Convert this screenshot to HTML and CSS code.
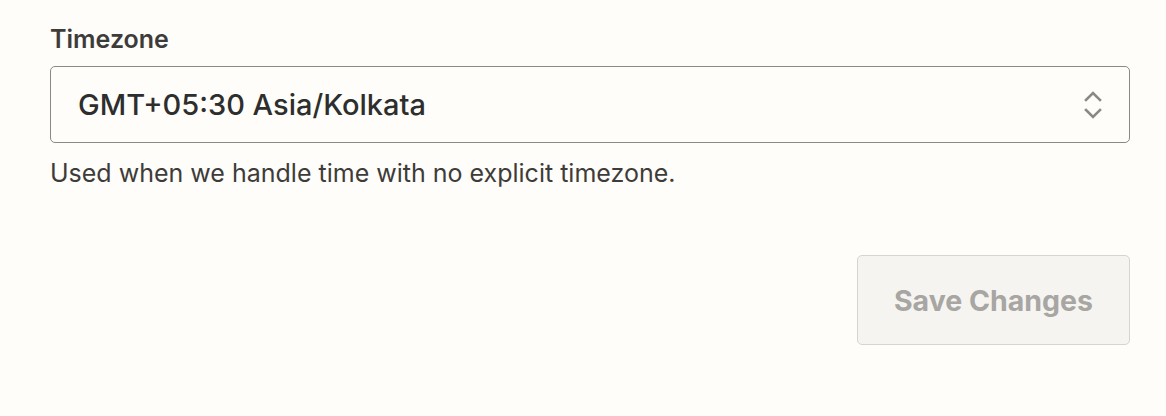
FILE: index.html
```html
<!DOCTYPE html>
<html lang="en">
<head>
<meta charset="utf-8">
<title>Timezone</title>
<link rel="stylesheet" href="styles.css">
</head>
<body>
<main class="settings">
  <div class="field">
    <label class="field-label" for="tz">Timezone</label>
    <div class="select">
      <span class="select-value" id="tz">GMT+05:30 Asia/Kolkata</span>
      <svg class="select-icon" width="20" height="32" viewBox="0 0 20 32" aria-hidden="true">
        <path d="M3 11 L10 4 L17 11" fill="none" stroke="#8b8985" stroke-width="2.6" stroke-linecap="square" stroke-linejoin="miter"/>
        <path d="M3 21 L10 28 L17 21" fill="none" stroke="#8b8985" stroke-width="2.6" stroke-linecap="square" stroke-linejoin="miter"/>
      </svg>
    </div>
    <p class="field-help">Used when we handle time with no explicit timezone.</p>
  </div>
  <div class="actions">
    <button class="btn-save" type="button" disabled>Save Changes</button>
  </div>
</main>
</body>
</html>
```

FILE: styles.css
```css
html, body {
  margin: 0;
  padding: 0;
  background: #fffdf9;
}
body {
  font-family: Inter, "Noto Sans", sans-serif;
  color: #2d2e2e;
}
.settings {
  width: 1080px;
  padding: 24px 0 0 50px;
}
.field {
  display: flex;
  flex-direction: column;
}
.field-label {
  font-size: 25px;
  font-weight: 600;
  line-height: 30px;
  color: #3d3c3a;
  margin-bottom: 12px;
}
.select {
  box-sizing: border-box;
  height: 77px;
  border: 1px solid #8b8985;
  border-radius: 5px;
  display: flex;
  align-items: center;
  justify-content: space-between;
  padding: 0 26px 0 27px;
}
.select-value {
  font-size: 29px;
  font-weight: 500;
  color: #2d2e2e;
}
.select-icon {
  display: block;
}
.field-help {
  margin: 15px 0 0;
  font-size: 25px;
  line-height: 30px;
  color: #3d3c3a;
}
.actions {
  display: flex;
  justify-content: flex-end;
  margin-top: 67px;
}
.btn-save {
  box-sizing: border-box;
  width: 273px;
  height: 90px;
  border: 1px solid #d6d4d0;
  border-radius: 5px;
  background: #f5f4f1;
  font-family: Inter, "Noto Sans", sans-serif;
  font-size: 28.5px;
  font-weight: 700;
  color: #a8a6a2;
  padding: 0;
}
```
